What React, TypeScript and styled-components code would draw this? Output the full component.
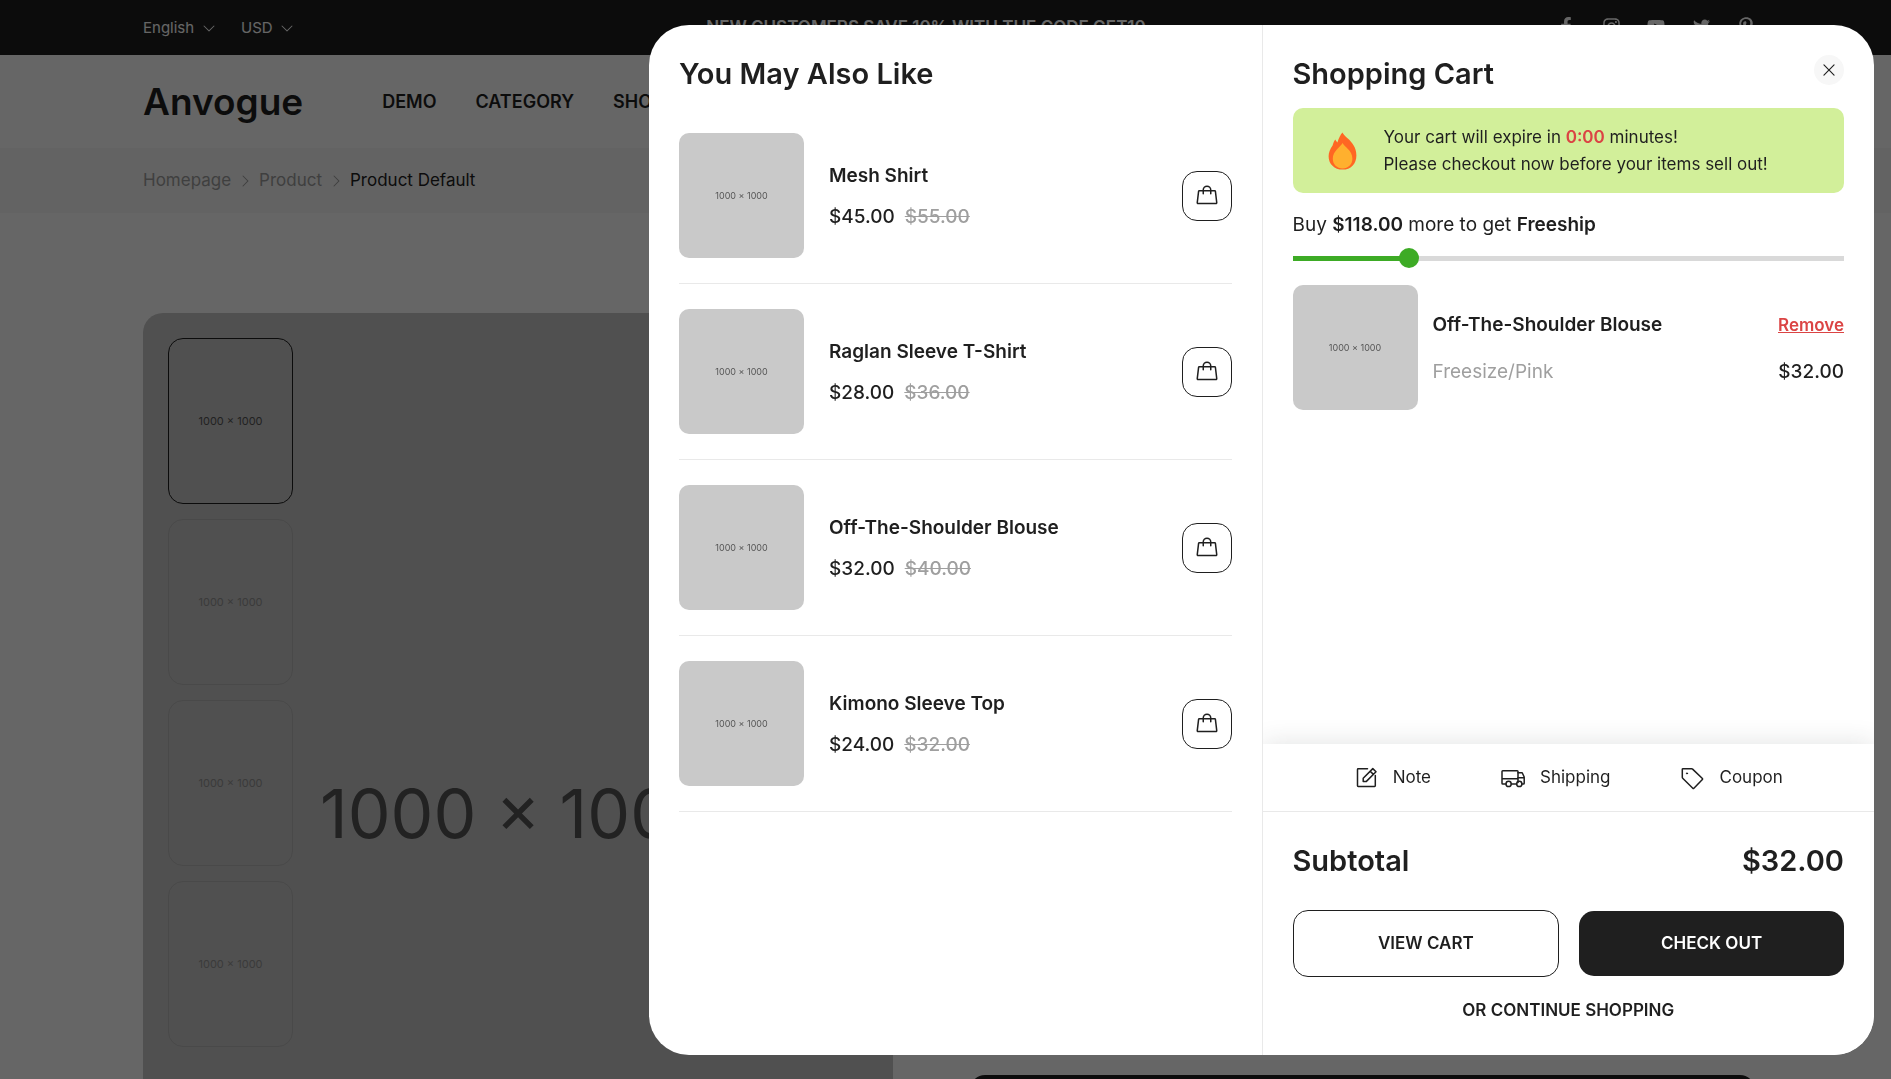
import React, { useState } from "react";
import styled, { createGlobalStyle } from "styled-components";
import { PiCaretDown, PiCaretRight, PiHandbag, PiX } from "react-icons/pi";
import { FaFacebookF, FaInstagram, FaPinterestP, FaTwitter, FaYoutube } from "react-icons/fa";

const ink = "#1f1f1f";
const muted = "#9f9f9f";
const line = "#e9e9e9";
const red = "#db4444";
const green = "#3dab25";

const GlobalStyle = createGlobalStyle`
  *, *::before, *::after { box-sizing: border-box; }
  body {
    margin: 0;
    overflow: hidden;
    background: #fff;
    color: ${ink};
    font-family: Inter, "Liberation Sans", sans-serif;
    font-size: 17px;
    line-height: 27px;
  }
  h1, h2, h3, p, ul { margin: 0; padding: 0; }
  ul { list-style: none; }
  a { color: inherit; text-decoration: none; }
  button, select { font: inherit; color: inherit; cursor: pointer; }
  svg { display: block; flex: none; }
`;

/* ---------- Page behind the dialog ---------- */

const Page = styled.div`
  height: 100vh;
  overflow: hidden;
`;

const Container = styled.div`
  display: flex;
  align-items: center;
  padding: 0 136px 0 143px;
`;

const TopBar = styled(Container)`
  height: 55px;
  justify-content: space-between;
  background: ${ink};
  color: #fff;
`;

const Choices = styled.div`
  display: flex;
  gap: 24px;
`;

const Choice = styled.label`
  display: flex;
  align-items: center;
  gap: 6px;
  font-size: 15px;
  line-height: 24px;
`;

const PlainSelect = styled.select`
  appearance: none;
  padding: 0;
  border: 0;
  background: none;
`;

const Announcement = styled.p`
  font-weight: 600;
`;

const SocialList = styled.ul`
  display: flex;
  gap: 27px;
  padding-bottom: 3px;
`;

const SocialLink = styled.a`
  display: flex;
  align-items: center;
  justify-content: center;
  width: 18px;
  height: 20px;
`;

const Header = styled(Container)`
  height: 93px;
  gap: 79px;
`;

const Logo = styled.a`
  font-size: 37px;
  line-height: 40px;
  font-weight: 600;
`;

const Nav = styled.nav`
  display: flex;
  gap: 39px;
  font-size: 18px;
  font-weight: 600;
`;

const Breadcrumb = styled(Container)`
  height: 65px;
  gap: 6px;
  background: #f7f7f7;
  color: ${muted};
`;

const CurrentPage = styled.span`
  color: ${ink};
`;

const Product = styled.main`
  display: grid;
  grid-template-columns: 750fr 785fr;
  gap: 77px;
  padding: 100px 136px 0 143px;
`;

const Gallery = styled.section`
  position: relative;
  display: flex;
  align-items: center;
  justify-content: center;
  aspect-ratio: 3 / 4;
  border-radius: 20px;
  background: #c8c8c8;
  color: #555;
  font-size: 68px;
  line-height: 80px;
  white-space: nowrap;
`;

const Thumbs = styled.div`
  position: absolute;
  top: 25px;
  left: 25px;
  display: flex;
  flex-direction: column;
  gap: 15px;
`;

const Thumb = styled.button<{ $active: boolean }>`
  width: 125px;
  height: 166px;
  padding: 0;
  border: 1px solid ${(p) => (p.$active ? ink : "#b6b6b6")};
  border-radius: 15px;
  background: #c8c8c8;
  color: ${(p) => (p.$active ? "#555" : "#939393")};
  font-size: 11px;
  line-height: 16px;
`;

const BuyColumn = styled.section`
  padding-top: 762px;
`;

const BuyButton = styled.button`
  width: 100%;
  height: 65px;
  border: 0;
  border-radius: 15px;
  background: ${ink};
`;

/* ---------- Dialog ---------- */

const Overlay = styled.div`
  position: fixed;
  inset: 0;
  display: flex;
  justify-content: flex-end;
  padding: 25px 17px 24px;
  background: rgba(0, 0, 0, 0.6);
`;

const Dialog = styled.div`
  display: grid;
  grid-template-columns: minmax(0, 1fr) minmax(0, 1fr);
  width: 1225px;
  max-width: 100%;
  border-radius: 40px;
  background: #fff;
  overflow: hidden;
`;

const Suggestions = styled.section`
  padding: 30px 30px 0;
`;

const Title = styled.h2`
  font-size: 29px;
  line-height: 38px;
  font-weight: 600;
`;

const SuggestionList = styled.ul`
  margin-top: 15px;
`;

const Suggestion = styled.li`
  display: flex;
  align-items: center;
  gap: 25px;
  padding: 25px 0;
  border-bottom: 1px solid ${line};
`;

const Photo = styled.div`
  display: flex;
  align-items: center;
  justify-content: center;
  flex: none;
  width: 125px;
  height: 125px;
  border-radius: 10px;
  background: #c9c9c9;
  color: #555;
  font-size: 9px;
  line-height: 12px;
`;

const SuggestionText = styled.div`
  display: flex;
  flex: 1;
  flex-direction: column;
  gap: 13px;
  padding-top: 2px;
`;

const ItemName = styled.h3`
  font-size: 19px;
  line-height: 28px;
  font-weight: 600;
`;

const Prices = styled.div`
  display: flex;
  gap: 10px;
`;

const Price = styled.span`
  font-size: 19px;
  line-height: 28px;
  font-weight: 500;
`;

const OldPrice = styled(Price).attrs({ as: "del" })`
  color: ${muted};
`;

const AddButton = styled.button`
  display: flex;
  align-items: center;
  justify-content: center;
  width: 50px;
  height: 50px;
  padding: 0;
  border: 1px solid ${ink};
  border-radius: 15px;
  background: #fff;
`;

const Cart = styled.section`
  display: flex;
  flex-direction: column;
  border-left: 1px solid ${line};
  overflow: hidden;
`;

const CartBody = styled.div`
  flex: 1;
  padding: 30px 30px 0;
`;

const CartHeader = styled.div`
  display: flex;
  align-items: flex-start;
  justify-content: space-between;
`;

const CloseButton = styled.button`
  display: flex;
  align-items: center;
  justify-content: center;
  width: 30px;
  height: 30px;
  padding: 0;
  border: 0;
  border-radius: 50%;
  background: #f7f7f7;
`;

const Expiry = styled.div`
  display: flex;
  align-items: center;
  gap: 27px;
  min-height: 85px;
  margin-top: 15px;
  padding: 0 35px;
  border-radius: 10px;
  background: #d2ef9a;
`;

const Countdown = styled.span`
  color: ${red};
  font-weight: 600;
`;

const Freeship = styled.label`
  display: block;
  margin-top: 17px;
  font-size: 19px;
  line-height: 30px;

  strong { font-weight: 600; }
`;

const Progress = styled.input`
  display: block;
  width: 100%;
  height: 20px;
  margin: 8px 0 0;
  appearance: none;
  background: linear-gradient(${green}, ${green}) left center / 21% 5px no-repeat,
    linear-gradient(#d9d9d9, #d9d9d9) left center / 100% 5px no-repeat;

  &::-webkit-slider-thumb {
    appearance: none;
    width: 20px;
    height: 20px;
    border-radius: 50%;
    background: ${green};
  }
`;

const CartItem = styled.div`
  display: flex;
  align-items: center;
  gap: 15px;
  margin-top: 17px;
`;

const CartItemText = styled.div`
  display: flex;
  flex: 1;
  flex-direction: column;
  gap: 19px;
  padding-top: 2px;
`;

const Split = styled.div`
  display: flex;
  align-items: center;
  justify-content: space-between;
`;

const Variant = styled.span`
  color: ${muted};
  font-size: 19px;
  line-height: 28px;
`;

const RemoveButton = styled.button`
  padding: 0;
  border: 0;
  background: none;
  color: ${red};
  font-weight: 600;
  text-decoration: underline;
`;

const CartFooter = styled.div`
  background: #fff;
  box-shadow: 0 0 25px rgba(43, 52, 53, 0.14);
`;

const Extras = styled.div`
  display: flex;
  align-items: center;
  justify-content: center;
  gap: 70px;
  height: 68px;
  border-bottom: 1px solid ${line};
`;

const ExtraButton = styled.button`
  display: flex;
  align-items: center;
  gap: 15px;
  padding: 0;
  border: 0;
  background: none;
`;

const Checkout = styled.div`
  padding: 30px 30px 32px;
`;

const Actions = styled.div`
  display: flex;
  align-items: center;
  gap: 20px;
  margin-top: 30px;
`;

const Action = styled.a<{ $solid?: boolean }>`
  flex: 1;
  padding: 20px;
  border: ${(p) => (p.$solid ? "0" : `1px solid ${ink}`)};
  border-radius: 15px;
  background: ${(p) => (p.$solid ? ink : "#fff")};
  color: ${(p) => (p.$solid ? "#fff" : ink)};
  font-weight: 600;
  line-height: 25px;
  text-align: center;
`;

const ContinueButton = styled.button`
  display: block;
  margin: 20px auto 0;
  padding: 0;
  border: 0;
  background: none;
  font-weight: 600;
  line-height: 26px;
`;

/* ---------- Drawings ---------- */

const Flame = () => (
  <svg width="29" height="38" viewBox="0 0 29 38" aria-hidden="true">
    <path
      fill="#ff6723"
      d="M14.4 0.4C12.6 2.6 10.6 6 9.4 10.4C8.6 9.6 7.7 8.7 7.4 7.6C5.8 9.2 5.4 11.4 4.6 13.4C2.2 16.8 0.6 20.2 0.6 24.2C0.6 32 6.4 37.6 14.6 37.6C22.8 37.6 28.4 32 28.4 23.4C28.4 15.4 23.6 10 19.8 6.6C17.4 4.4 15.6 2.6 14.4 0.4Z"
    />
    <path
      fill="#ffb02e"
      d="M14.6 11C16.4 14.8 24.4 18.4 24.4 26.8C24.4 32.6 20.2 36.4 14.6 36.4C9 36.4 4.8 32.6 4.8 26.8C4.8 18.8 12.4 15.2 14.6 11Z"
    />
  </svg>
);

const Drawing = ({ children }: { children: React.ReactNode }) => (
  <svg
    width="24"
    height="24"
    viewBox="0 0 24 24"
    fill="none"
    stroke="currentColor"
    strokeWidth="1.5"
    strokeLinejoin="round"
    strokeLinecap="round"
    aria-hidden="true"
  >
    {children}
  </svg>
);

const NoteIcon = () => (
  <Drawing>
    <path d="M13.5 2.8H4.2a.7.7 0 0 0-.7.7v16.3a.7.7 0 0 0 .7.7h16.4a.7.7 0 0 0 .7-.7V9.5" />
    <path d="M9.2 15.4v-3.2l9.6-9.6 3.2 3.2-9.6 9.6zM16.2 5.2l3.2 3.2" />
  </Drawing>
);

const TruckIcon = () => (
  <Drawing>
    <path d="M4.9 18H1.8a.8.8 0 0 1-.8-.8V5.6a.8.8 0 0 1 .8-.8h14.4a.8.8 0 0 1 .8.8v11M10.4 18h5.2M1 12.8h16" />
    <path d="M17 6.8h4.2l2 4.2v6.2a.8.8 0 0 1-.8.8H21M17 11.8h6" />
    <circle cx="7.6" cy="17.9" r="2.6" />
    <circle cx="18.3" cy="17.9" r="2.6" />
  </Drawing>
);

const TagIcon = () => (
  <Drawing>
    <path d="M2.3 3.4a.7.7 0 0 1 .7-.7h8.6a1.4 1.4 0 0 1 1 .4l9.8 9.4a.8.8 0 0 1 0 1.1l-8.5 8.6a.8.8 0 0 1-1.1 0L2.7 12.3a1.4 1.4 0 0 1-.4-1z" />
    <circle cx="7" cy="7.4" r="0.6" fill="currentColor" strokeWidth="1" />
  </Drawing>
);

/* ---------- Data ---------- */

const suggestions = [
  { name: "Mesh Shirt", price: "$45.00", old: "$55.00" },
  { name: "Raglan Sleeve T-Shirt", price: "$28.00", old: "$36.00" },
  { name: "Off-The-Shoulder Blouse", price: "$32.00", old: "$40.00" },
  { name: "Kimono Sleeve Top", price: "$24.00", old: "$32.00" },
];

const socials = [
  { name: "Facebook", icon: <FaFacebookF size={18} /> },
  { name: "Instagram", icon: <FaInstagram size={19} /> },
  { name: "YouTube", icon: <FaYoutube size={18} /> },
  { name: "Twitter", icon: <FaTwitter size={17} /> },
  { name: "Pinterest", icon: <FaPinterestP size={18} /> },
];

const placeholder = "1000 × 1000";

export default function App() {
  const [activeThumb, setActiveThumb] = useState(0);
  const [progress, setProgress] = useState(20);

  return (
    <>
      <GlobalStyle />
      <Page>
        <TopBar>
          <Choices>
            <Choice>
              <PlainSelect aria-label="Language">
                <option>English</option>
              </PlainSelect>
              <PiCaretDown size={16} />
            </Choice>
            <Choice>
              <PlainSelect aria-label="Currency">
                <option>USD</option>
              </PlainSelect>
              <PiCaretDown size={16} />
            </Choice>
          </Choices>
          <Announcement>NEW CUSTOMERS SAVE 10% WITH THE CODE GET10</Announcement>
          <SocialList>
            {socials.map((s) => (
              <li key={s.name}>
                <SocialLink href="#" aria-label={s.name}>
                  {s.icon}
                </SocialLink>
              </li>
            ))}
          </SocialList>
        </TopBar>
        <Header as="header">
          <Logo href="#">Anvogue</Logo>
          <Nav>
            <a href="#">DEMO</a>
            <a href="#">CATEGORY</a>
            <a href="#">SHOP</a>
          </Nav>
        </Header>
        <Breadcrumb as="nav" aria-label="Breadcrumb">
          <a href="#">Homepage</a>
          <PiCaretRight size={16} />
          <a href="#">Product</a>
          <PiCaretRight size={16} />
          <CurrentPage>Product Default</CurrentPage>
        </Breadcrumb>
        <Product>
          <Gallery>
            {placeholder}
            <Thumbs>
              {[0, 1, 2, 3].map((n) => (
                <Thumb key={n} $active={n === activeThumb} onClick={() => setActiveThumb(n)}>
                  {placeholder}
                </Thumb>
              ))}
            </Thumbs>
          </Gallery>
          <BuyColumn>
            <BuyButton aria-label="Buy" />
          </BuyColumn>
        </Product>
      </Page>

      <Overlay>
        <Dialog role="dialog" aria-modal="true" aria-labelledby="cart-title">
          <Suggestions>
            <Title>You May Also Like</Title>
            <SuggestionList>
              {suggestions.map((s) => (
                <Suggestion key={s.name}>
                  <Photo>{placeholder}</Photo>
                  <SuggestionText>
                    <ItemName>{s.name}</ItemName>
                    <Prices>
                      <Price>{s.price}</Price>
                      <OldPrice>{s.old}</OldPrice>
                    </Prices>
                  </SuggestionText>
                  <AddButton aria-label={`Add ${s.name} to cart`}>
                    <PiHandbag size={24} />
                  </AddButton>
                </Suggestion>
              ))}
            </SuggestionList>
          </Suggestions>

          <Cart>
            <CartBody>
              <CartHeader>
                <Title id="cart-title">Shopping Cart</Title>
                <CloseButton aria-label="Close">
                  <PiX size={18} />
                </CloseButton>
              </CartHeader>
              <Expiry>
                <Flame />
                <div>
                  <p>
                    Your cart will expire in <Countdown>0:00</Countdown> minutes!
                  </p>
                  <p>Please checkout now before your items sell out!</p>
                </div>
              </Expiry>
              <Freeship htmlFor="freeship">
                Buy <strong>$118.00</strong> more to get <strong>Freeship</strong>
              </Freeship>
              <Progress
                id="freeship"
                type="range"
                min={0}
                max={100}
                value={progress}
                onChange={(e) => setProgress(Number(e.target.value))}
              />
              <CartItem>
                <Photo>{placeholder}</Photo>
                <CartItemText>
                  <Split>
                    <ItemName>Off-The-Shoulder Blouse</ItemName>
                    <RemoveButton>Remove</RemoveButton>
                  </Split>
                  <Split>
                    <Variant>Freesize/Pink</Variant>
                    <Price>$32.00</Price>
                  </Split>
                </CartItemText>
              </CartItem>
            </CartBody>

            <CartFooter>
              <Extras>
                <ExtraButton>
                  <NoteIcon />
                  Note
                </ExtraButton>
                <ExtraButton>
                  <TruckIcon />
                  Shipping
                </ExtraButton>
                <ExtraButton>
                  <TagIcon />
                  Coupon
                </ExtraButton>
              </Extras>
              <Checkout>
                <Split>
                  <Title as="span">Subtotal</Title>
                  <Title as="span">$32.00</Title>
                </Split>
                <Actions>
                  <Action href="#">VIEW CART</Action>
                  <Action href="#" $solid>
                    CHECK OUT
                  </Action>
                </Actions>
                <ContinueButton>OR CONTINUE SHOPPING</ContinueButton>
              </Checkout>
            </CartFooter>
          </Cart>
        </Dialog>
      </Overlay>
    </>
  );
}
